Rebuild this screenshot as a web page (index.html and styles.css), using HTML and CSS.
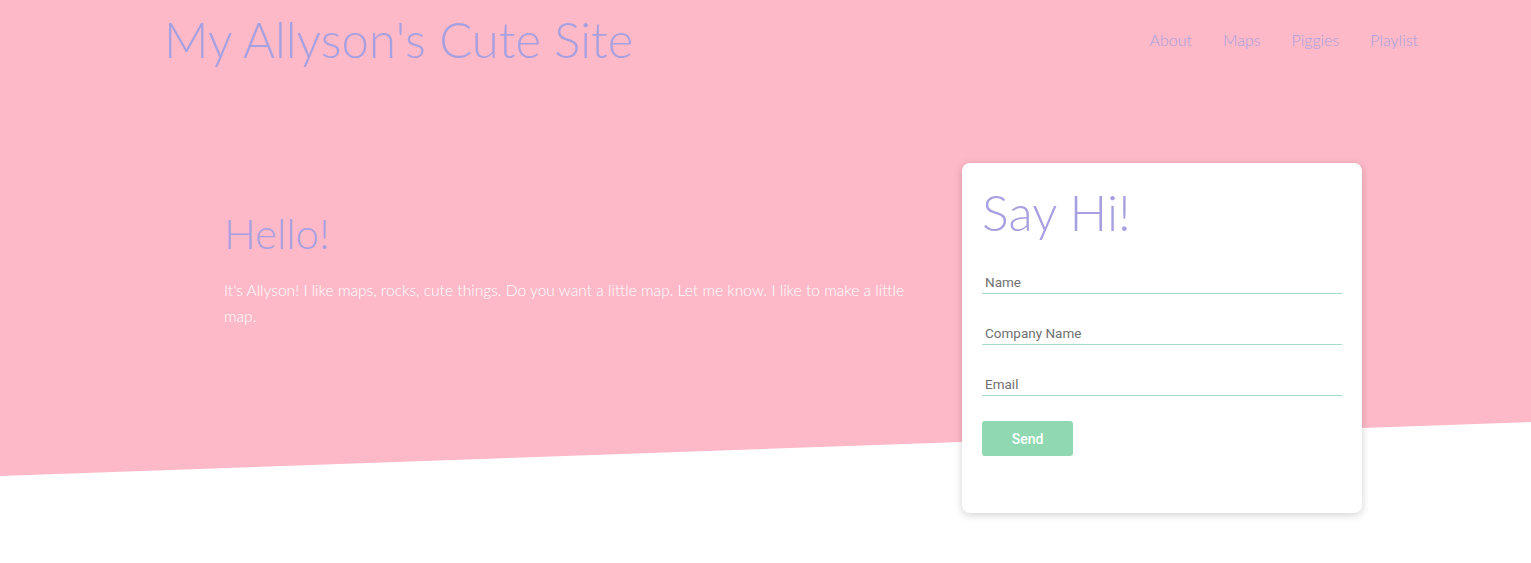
FILE: index.html
```html
<!DOCTYPE html>
<html>
<head>
<meta charset="utf-8">
<link rel="stylesheet" href="styles.css">
</head>
<body>
<div class="page">
  <div class="hero">
    <header class="topbar">
      <h1 class="site-title">My Allyson's Cute Site</h1>
      <nav class="nav">
        <a href="#">About</a>
        <a href="#">Maps</a>
        <a href="#">Piggies</a>
        <a href="#">Playlist</a>
      </nav>
    </header>
    <div class="content">
      <div class="intro">
        <h2 class="hello">Hello!</h2>
        <p class="blurb">It's Allyson! I like maps, rocks, cute things. Do you want a little map. Let me know. I like to make a little map.</p>
      </div>
      <form class="card">
        <h2 class="card-title">Say Hi!</h2>
        <label class="field"><input type="text" placeholder="Name"></label>
        <label class="field"><input type="text" placeholder="Company Name"></label>
        <label class="field"><input type="text" placeholder="Email"></label>
        <button type="button" class="send">Send</button>
      </form>
    </div>
  </div>
</div>
</body>
</html>
```
FILE: styles.css
```css
html, body {
  margin: 0;
  padding: 0;
  background: #ffffff;
}
body {
  font-family: "Lato Light", Lato, "Open Sans", sans-serif;
  height: 563px;
  overflow: hidden;
}
.page {
  position: relative;
}
.hero {
  position: relative;
}
.hero::before {
  content: "";
  position: absolute;
  left: 0;
  top: 0;
  width: 100%;
  height: 476px;
  background: #fdb9c8;
  clip-path: polygon(0 0, 100% 0, 100% 422px, 0 476px);
  z-index: 0;
}
.topbar {
  position: relative;
  z-index: 1;
  display: flex;
  justify-content: space-between;
  align-items: center;
  padding: 0 113px 0 164px;
  height: 78px;
}
.site-title {
  margin: 0;
  font-family: "Lato Light", Lato, sans-serif;
  font-weight: 300;
  font-size: 49px;
  color: #a7a0e0;
  line-height: 1;
}
.nav {
  display: flex;
  gap: 31px;
}
.nav a {
  text-decoration: none;
  font-family: "Lato Light", Lato, sans-serif;
  font-weight: 300;
  font-size: 16px;
  color: #a7a0e0;
}
.content {
  position: relative;
  z-index: 1;
  display: flex;
  justify-content: space-between;
  align-items: flex-start;
  padding: 85px 169px 0 224px;
}
.intro {
  width: 690px;
  padding-top: 49px;
}
.hello {
  margin: 0;
  font-family: "Lato Light", Lato, sans-serif;
  font-weight: 300;
  font-size: 42px;
  color: #a7a0e0;
  line-height: 1;
}
.blurb {
  margin: 23px 0 0;
  font-family: "Lato Light", Lato, sans-serif;
  font-weight: 300;
  font-size: 15.6px;
  line-height: 26px;
  color: #ffffff;
}
.card {
  width: 400px;
  height: 350px;
  box-sizing: border-box;
  padding: 20px;
  background: #ffffff;
  border-radius: 8px;
  box-shadow: 0 2px 8px rgba(0, 0, 0, 0.18);
  display: flex;
  flex-direction: column;
}
.card-title {
  margin: 0;
  font-family: "Lato Light", Lato, sans-serif;
  font-weight: 300;
  font-size: 50px;
  line-height: 1;
  color: #a7a0e0;
  padding-top: 4px;
}
.field {
  display: block;
  margin-top: 33px;
}
.field + .field {
  margin-top: 27px;
}
.field input {
  display: block;
  width: 100%;
  box-sizing: border-box;
  border: 0;
  border-bottom: 1.5px solid #a4dcc9;
  padding: 4px 3px 3px;
  font-family: Roboto, sans-serif;
  font-size: 13.5px;
  outline: none;
  background: transparent;
}
.field input::placeholder {
  color: #707070;
}
.send {
  margin-top: 25px;
  width: 91px;
  height: 35px;
  border: 0;
  border-radius: 3px;
  background: #8fd8b1;
  color: #ffffff;
  font-family: Roboto, sans-serif;
  font-weight: 500;
  font-size: 14px;
}
```
